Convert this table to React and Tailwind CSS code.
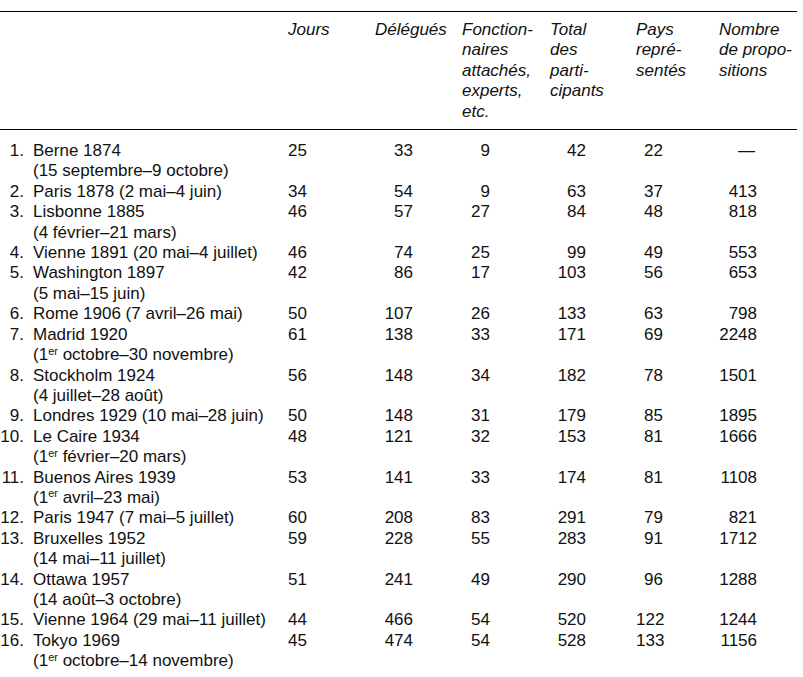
const rows = [
  ['1.', 'Berne 1874', '(15 septembre–9 octobre)', '25', '33', '9', '42', '22', '—'],
  ['2.', 'Paris 1878 (2 mai–4 juin)', null, '34', '54', '9', '63', '37', '413'],
  ['3.', 'Lisbonne 1885', '(4 février–21 mars)', '46', '57', '27', '84', '48', '818'],
  ['4.', 'Vienne 1891 (20 mai–4 juillet)', null, '46', '74', '25', '99', '49', '553'],
  ['5.', 'Washington 1897', '(5 mai–15 juin)', '42', '86', '17', '103', '56', '653'],
  ['6.', 'Rome 1906 (7 avril–26 mai)', null, '50', '107', '26', '133', '63', '798'],
  ['7.', 'Madrid 1920', ['1', 'er', ' octobre–30 novembre)'], '61', '138', '33', '171', '69', '2248'],
  ['8.', 'Stockholm 1924', '(4 juillet–28 août)', '56', '148', '34', '182', '78', '1501'],
  ['9.', 'Londres 1929 (10 mai–28 juin)', null, '50', '148', '31', '179', '85', '1895'],
  ['10.', 'Le Caire 1934', ['1', 'er', ' février–20 mars)'], '48', '121', '32', '153', '81', '1666'],
  ['11.', 'Buenos Aires 1939', ['1', 'er', ' avril–23 mai)'], '53', '141', '33', '174', '81', '1108'],
  ['12.', 'Paris 1947 (7 mai–5 juillet)', null, '60', '208', '83', '291', '79', '821'],
  ['13.', 'Bruxelles 1952', '(14 mai–11 juillet)', '59', '228', '55', '283', '91', '1712'],
  ['14.', 'Ottawa 1957', '(14 août–3 octobre)', '51', '241', '49', '290', '96', '1288'],
  ['15.', 'Vienne 1964 (29 mai–11 juillet)', null, '44', '466', '54', '520', '122', '1244'],
  ['16.', 'Tokyo 1969', ['1', 'er', ' octobre–14 novembre)'], '45', '474', '54', '528', '133', '1156'],
];

const cols = 'grid grid-cols-[33px_255px_87px_87px_88px_86px_83px_78px]';

const SubLine = ({ value }) => {
  if (!value) return null;
  if (typeof value === 'string') return <div>{value}</div>;
  return (
    <div>
      ({value[0]}
      <sup className="text-[11px]">{value[1]}</sup>
      {value[2]}
    </div>
  );
};

const App = () => {
  return (
    <div className="w-[803px] h-[677px] bg-white text-[#111] font-['Liberation_Sans',Arial,sans-serif] text-[17px] leading-[20.4px]">
      <div className="pt-[11px] w-[797px]">
        <div className="border-t border-black" />

        {/* header */}
        <div className={`${cols} italic pt-[8px] pb-[7px] border-b border-black`}>
          <div />
          <div />
          <div>Jours</div>
          <div>Délégués</div>
          <div>
            Fonction-
            <br />
            naires
            <br />
            attachés,
            <br />
            experts,
            <br />
            etc.
          </div>
          <div>
            Total
            <br />
            des
            <br />
            parti-
            <br />
            cipants
          </div>
          <div>
            Pays
            <br />
            repré-
            <br />
            sentés
          </div>
          <div>
            Nombre
            <br />
            de propo-
            <br />
            sitions
          </div>
        </div>

        {/* body */}
        <div className="pt-[11px]">
          {rows.map((r) => (
            <div key={r[0]} className={cols}>
              <div className="text-right pr-[9px]">{r[0]}</div>
              <div className="whitespace-nowrap">
                <div>{r[1]}</div>
                <SubLine value={r[2]} />
              </div>
              <div className="text-right pr-[68px]">{r[3]}</div>
              <div className="text-right pr-[49px]">{r[4]}</div>
              <div className="text-right pr-[60px]">{r[5]}</div>
              <div className="text-right pr-[50px]">{r[6]}</div>
              <div className="text-right pr-[56px]">{r[7]}</div>
              <div className={r[8] === '—' ? 'text-right pr-[42px]' : 'text-right pr-[40px]'}>{r[8]}</div>
            </div>
          ))}
        </div>
      </div>
    </div>
  );
};

export default App;
